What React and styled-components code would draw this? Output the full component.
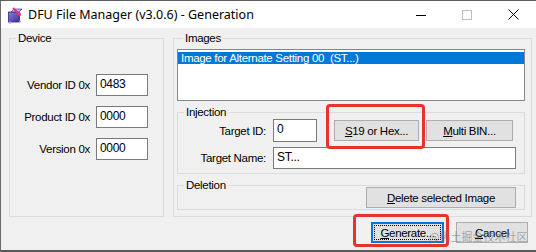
import React from 'react';
import styled, { createGlobalStyle, css } from 'styled-components';

const Global = createGlobalStyle`
  html, body { margin: 0; padding: 0; background: #fff; }
  body { font-family: "Liberation Sans", Arial, sans-serif; }
`;

const Window = styled.div`
  position: relative;
  width: 536px;
  height: 252px;
  box-sizing: border-box;
  border-top: 1px solid #5f5f5f;
  border-left: 1px solid #6b6b6b;
  border-bottom: 2px solid #5a5a5a;
  background: #f0f0f0;
  display: flex;
  flex-direction: column;
  overflow: hidden;
  font-family: "Liberation Sans", Arial, sans-serif;
  font-size: 11.5px;
  letter-spacing: -0.3px;
  color: #000;
`;

const TitleBar = styled.div`
  height: 27px;
  flex: none;
  background: #fff;
  display: flex;
  align-items: center;
`;

const AppIcon = styled.svg`
  margin-left: 6px;
  width: 16px;
  height: 18px;
  flex: none;
`;

const Title = styled.div`
  margin-left: 5px;
  font-family: "Noto Sans", "Segoe UI", sans-serif;
  font-size: 12.5px;
  letter-spacing: 0;
  color: #000;
  flex: 1;
`;

const Controls = styled.div`
  display: flex;
  height: 100%;
`;

const Ctrl = styled.div`
  width: 46px;
  height: 100%;
  display: flex;
  align-items: center;
  justify-content: center;
`;

const Client = styled.div`
  flex: 1;
  display: flex;
  flex-direction: column;
  padding: 4px 4px 0 8px;
`;

const Groups = styled.div`
  display: flex;
  gap: 9px;
`;

const Group = styled.fieldset`
  margin: 0;
  min-width: 0;
  border: 1px solid #dcdcdc;
  padding: ${p => p.$pad || '0'};
  display: flex;
  flex-direction: column;
  flex: ${p => p.$flex || 'none'};
  width: ${p => p.$w || 'auto'};
  margin-top: ${p => p.$mt || '0'};
  box-sizing: border-box;
`;

const Legend = styled.legend`
  margin-left: 6px;
  padding: 0 2px;
  line-height: 13px;
`;

const DeviceGrid = styled.div`
  margin-top: 29px;
  display: grid;
  grid-template-columns: 80px 52px;
  column-gap: 6px;
  row-gap: 10px;
  align-items: center;
`;

const Label = styled.div`
  text-align: right;
  white-space: nowrap;
`;

const Field = styled.div`
  box-sizing: border-box;
  width: ${p => p.$w || 'auto'};
  flex: ${p => p.$flex || 'none'};
  height: ${p => p.$h || '22px'};
  border: 1px solid #7a7a7a;
  background: #fff;
  padding: 2px 3px 0;
  line-height: 14px;
  font-size: 12px;
  white-space: nowrap;
`;

const ListBox = styled.div`
  margin-top: 4px;
  height: 52px;
  box-sizing: border-box;
  border: 1px solid #828790;
  background: #fff;
  padding: 2px 0 0;
`;

const ListItem = styled.div`
  background: ${p => (p.$selected ? '#0078d7' : 'transparent')};
  color: ${p => (p.$selected ? '#fff' : '#000')};
  line-height: 12px;
  height: 12px;
  padding-left: 3px;
  white-space: pre;
`;

const InjectionGrid = styled.div`
  display: grid;
  grid-template-columns: 88px 1fr;
  column-gap: 7px;
  row-gap: 5px;
  align-items: center;
  padding-right: 8px;
`;

const ButtonRow = styled.div`
  display: flex;
  align-items: center;
  gap: 7px;
`;

const Button = styled.button`
  box-sizing: border-box;
  width: ${p => p.$w};
  height: 21px;
  margin-left: ${p => p.$ml || '0'};
  background: #e1e1e1;
  border: 1px solid #adadad;
  font: inherit;
  letter-spacing: inherit;
  color: #000;
  padding: 0;
  text-align: center;
  ${p =>
    p.$default &&
    css`
      border-color: #0078d7;
      box-shadow: inset 0 0 0 1px #0078d7;
      outline: 1px dotted #000;
      outline-offset: -4px;
    `}
`;

const DeletionRow = styled.div`
  margin-top: -5px;
  display: flex;
  justify-content: flex-end;
  padding: 0 8px 1px 0;
`;

const Footer = styled.div`
  display: flex;
  justify-content: flex-end;
  gap: 12px;
  margin-top: 5px;
  padding-right: 4px;
`;

const Highlight = styled.div`
  position: absolute;
  box-sizing: border-box;
  border: 3px solid #e8322b;
  border-radius: 4px;
  pointer-events: none;
`;

const Watermark = styled.div`
  position: absolute;
  left: 428px;
  top: 228px;
  font-family: "Noto Sans CJK SC", sans-serif;
  font-size: 11px;
  line-height: 14px;
  letter-spacing: 0;
  color: rgba(120, 120, 120, 0.6);
  white-space: nowrap;
  pointer-events: none;
`;

export default function App() {
  return (
    <>
      <Global />
      <Window>
        <TitleBar>
          <AppIcon viewBox="0 0 16 18">
            <defs>
              <linearGradient id="cube" x1="0" y1="0" x2="1" y2="1">
                <stop offset="0" stopColor="#8d7fd8" />
                <stop offset="1" stopColor="#3b2f9a" />
              </linearGradient>
            </defs>
            <rect x="1.5" y="6" width="11" height="10" fill="url(#cube)" stroke="#2d2680" strokeWidth="0.8" />
            <path d="M4 6 L7 3 L15 3 L12 6 Z" fill="#b8b0ee" stroke="#2d2680" strokeWidth="0.6" />
            <path d="M6 2 L13 9" stroke="#e0357d" strokeWidth="2" />
            <path d="M13 5 L14 10 L9 9 Z" fill="#e0357d" />
            <circle cx="3" cy="16.5" r="1.3" fill="#f08ab8" />
            <circle cx="13" cy="15.5" r="1" fill="#f08ab8" />
          </AppIcon>
          <Title>DFU File Manager (v3.0.6) - Generation</Title>
          <Controls>
            <Ctrl>
              <svg width="10" height="10" viewBox="0 0 10 10">
                <path d="M0 5.5 H10" stroke="#000" strokeWidth="1" />
              </svg>
            </Ctrl>
            <Ctrl>
              <svg width="10" height="10" viewBox="0 0 10 10">
                <rect x="0.5" y="0.5" width="9" height="9" fill="none" stroke="#bfbfbf" strokeWidth="1" />
              </svg>
            </Ctrl>
            <Ctrl>
              <svg width="11" height="11" viewBox="0 0 11 11">
                <path d="M0.5 0.5 L10.5 10.5 M10.5 0.5 L0.5 10.5" stroke="#000" strokeWidth="1" />
              </svg>
            </Ctrl>
          </Controls>
        </TitleBar>

        <Client>
          <Groups>
            <Group $w="155px">
              <Legend>Device</Legend>
              <DeviceGrid>
                <Label>Vendor ID 0x</Label>
                <Field>0483</Field>
                <Label>Product ID 0x</Label>
                <Field>0000</Field>
                <Label>Version 0x</Label>
                <Field>0000</Field>
              </DeviceGrid>
            </Group>

            <Group $flex="1" $pad="0 6px 6px 3px">
              <Legend>Images</Legend>
              <ListBox>
                <ListItem $selected>{'Image for Alternate Setting 00  (ST...)'}</ListItem>
              </ListBox>

              <Group $pad="0 0 4px 0" $mt="5px">
                <Legend>Injection</Legend>
                <InjectionGrid>
                  <Label>Target ID:</Label>
                  <ButtonRow>
                    <Field $w="44px" $h="23px">0</Field>
                    <Button $w="85px" $ml="10px"><u>S</u>19 or Hex...</Button>
                    <Button $w="87px"><u>M</u>ulti BIN...</Button>
                  </ButtonRow>
                  <Label>Target Name:</Label>
                  <Field $h="22px">ST...</Field>
                </InjectionGrid>
              </Group>

              <Group $mt="5px">
                <Legend>Deletion</Legend>
                <DeletionRow>
                  <Button $w="150px"><u>D</u>elete selected Image</Button>
                </DeletionRow>
              </Group>
            </Group>
          </Groups>

          <Footer>
            <Button $w="73px" $default><u>G</u>enerate...</Button>
            <Button $w="72px"><u>C</u>ancel</Button>
          </Footer>
        </Client>

        <Highlight style={{ left: 325, top: 103, width: 99, height: 45 }} />
        <Highlight style={{ left: 352, top: 213, width: 96, height: 33 }} />
        <Watermark>@稀土掘金技术社区</Watermark>
      </Window>
    </>
  );
}
